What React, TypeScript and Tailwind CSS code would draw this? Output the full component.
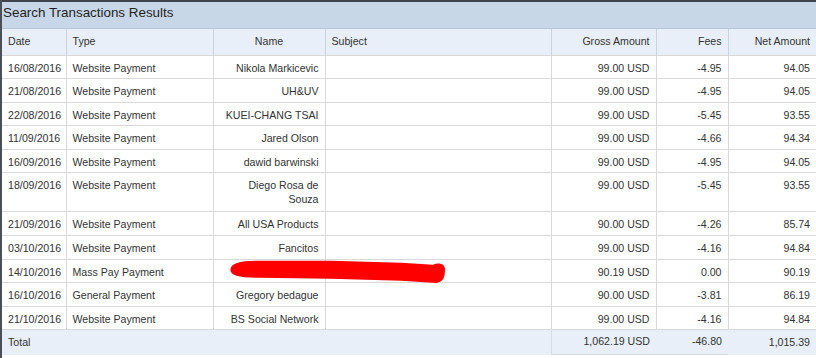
const rows = [
  { date: "16/08/2016", type: "Website Payment", name: "Nikola Markicevic", gross: "99.00 USD", fees: "-4.95", net: "94.05" },
  { date: "21/08/2016", type: "Website Payment", name: "UH&UV", gross: "99.00 USD", fees: "-4.95", net: "94.05" },
  { date: "22/08/2016", type: "Website Payment", name: "KUEI-CHANG TSAI", gross: "99.00 USD", fees: "-5.45", net: "93.55" },
  { date: "11/09/2016", type: "Website Payment", name: "Jared Olson", gross: "99.00 USD", fees: "-4.66", net: "94.34" },
  { date: "16/09/2016", type: "Website Payment", name: "dawid barwinski", gross: "99.00 USD", fees: "-4.95", net: "94.05" },
  { date: "18/09/2016", type: "Website Payment", name: "Diego Rosa de Souza", gross: "99.00 USD", fees: "-5.45", net: "93.55", tall: true },
  { date: "21/09/2016", type: "Website Payment", name: "All USA Products", gross: "90.00 USD", fees: "-4.26", net: "85.74" },
  { date: "03/10/2016", type: "Website Payment", name: "Fancitos", gross: "99.00 USD", fees: "-4.16", net: "94.84" },
  { date: "14/10/2016", type: "Mass Pay Payment", name: "", gross: "90.19 USD", fees: "0.00", net: "90.19" },
  { date: "16/10/2016", type: "General Payment", name: "Gregory bedague", gross: "90.00 USD", fees: "-3.81", net: "86.19" },
  { date: "21/10/2016", type: "Website Payment", name: "BS Social Network", gross: "99.00 USD", fees: "-4.16", net: "94.84" },
];

const td = "border border-[#d9d9d9] align-top px-[6px] pt-[5px] leading-[14px]";
const th = "border-l border-r border-[#c9d5e2] px-[6px] font-normal h-[26px] align-middle";

export default function App() {
  return (
    <div className="relative w-[816px] h-[358px] bg-white overflow-hidden border-l-2 border-[#4b5058] font-['Liberation_Sans',Arial,sans-serif] text-[#333]">
      <div className="h-[29px] border-t-2 border-[#3f444c] bg-[#c8d7e7] border-b border-b-[#b7c6d7] pl-[1px] text-[13.4px] leading-[21px] text-[#1f1f1f]">
        Search Transactions Results
      </div>
      <table className="table-fixed border-collapse w-[814px] text-[10.6px]">
        <colgroup>
          <col className="w-[64px]" />
          <col className="w-[147px]" />
          <col className="w-[112px]" />
          <col className="w-[226px]" />
          <col className="w-[105px]" />
          <col className="w-[72px]" />
          <col className="w-[88px]" />
        </colgroup>
        <thead>
          <tr className="bg-[#e8eff8] border-b border-[#d3dbe4]">
            <th className={`${th} text-left border-l-0`}>Date</th>
            <th className={`${th} text-left`}>Type</th>
            <th className={`${th} text-center`}>Name</th>
            <th className={`${th} text-left`}>Subject</th>
            <th className={`${th} text-right`}>Gross Amount</th>
            <th className={`${th} text-right`}>Fees</th>
            <th className={`${th} text-right border-r-0`}>Net Amount</th>
          </tr>
        </thead>
        <tbody>
          {rows.map((r) => (
            <tr key={r.date} className={r.tall ? "h-[39px]" : "h-[23.6px]"}>
              <td className={`${td} border-l-0`}>{r.date}</td>
              <td className={td}>{r.type}</td>
              <td className={`${td} text-right`}>
                {r.tall ? (
                  <>
                    Diego Rosa de
                    <br />
                    Souza
                  </>
                ) : (
                  r.name
                )}
              </td>
              <td className={td}></td>
              <td className={`${td} text-right`}>{r.gross}</td>
              <td className={`${td} text-right`}>{r.fees}</td>
              <td className={`${td} text-right border-r-0`}>{r.net}</td>
            </tr>
          ))}
          <tr className="h-[25px] bg-[#e8eff8]">
            <td className="px-[6px] align-middle">Total</td>
            <td></td>
            <td></td>
            <td></td>
            <td className="px-[6px] text-right align-middle border-l border-b border-[#d5dce5]">1,062.19 USD</td>
            <td className="px-[6px] text-right align-middle border-b border-[#d5dce5]">-46.80</td>
            <td className="px-[6px] text-right align-middle">1,015.39</td>
          </tr>
        </tbody>
      </table>
      <svg className="absolute inset-0 w-full h-full pointer-events-none" viewBox="0 0 816 358" aria-hidden="true">
        <path
          fill="#ff0000"
          d="M 229 270 C 229 264, 238 261, 255 261 L 330 261 L 400 263 L 432 265 C 438 262, 445 264, 444 271 C 444 280, 440 284, 432 283 L 400 281 L 330 279 L 258 278 C 238 278, 229 276, 229 270 Z"
        />
      </svg>
    </div>
  );
}
